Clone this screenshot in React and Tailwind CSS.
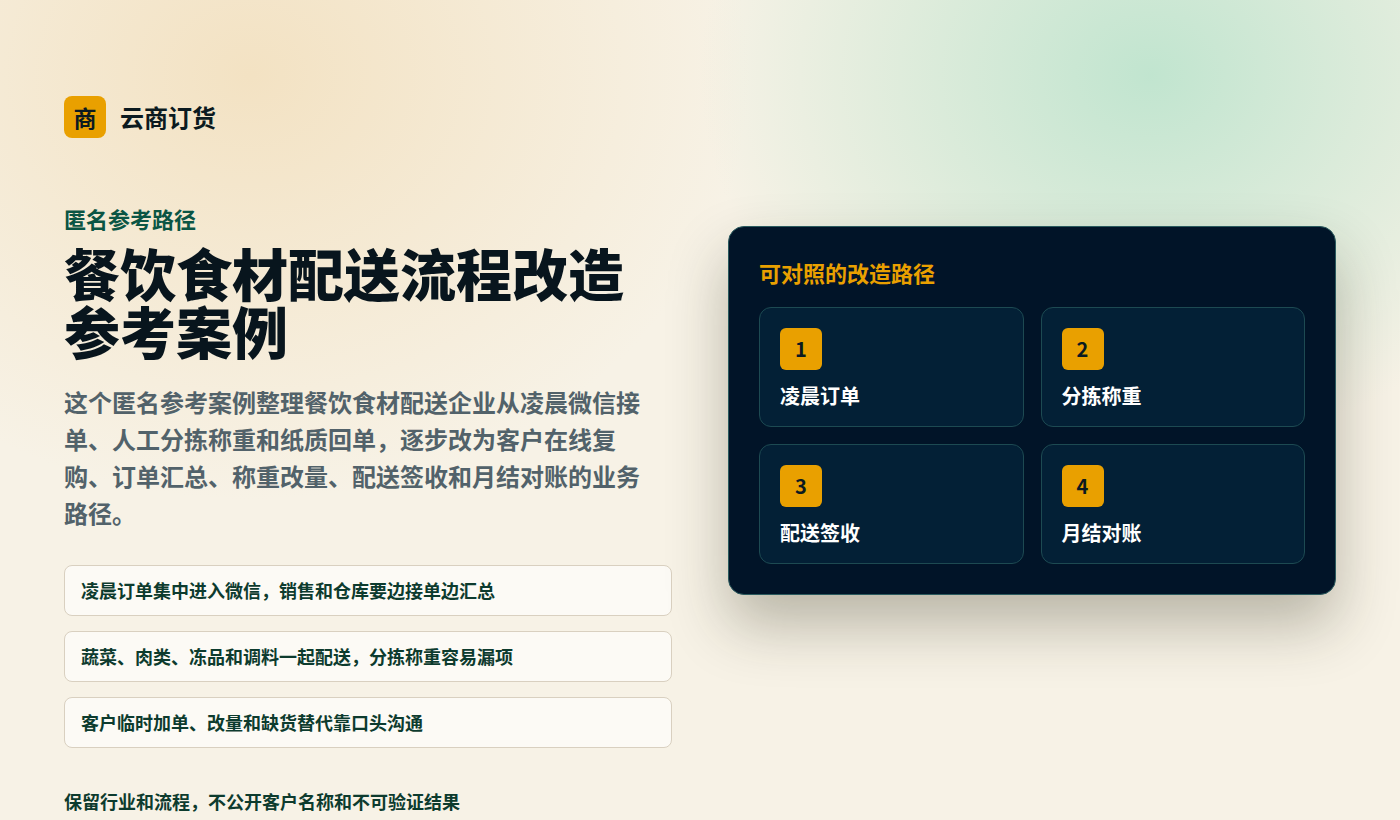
import React from "react";

const steps = ["凌晨订单", "分拣称重", "配送签收", "月结对账"];
const pains = [
  "凌晨订单集中进入微信，销售和仓库要边接单边汇总",
  "蔬菜、肉类、冻品和调料一起配送，分拣称重容易漏项",
  "客户临时加单、改量和缺货替代靠口头沟通",
];

export default function App() {
  return (
    <div
      className="relative min-h-[820px] w-full overflow-hidden bg-[#f7f2e6]"
      style={{ fontFamily: '"Noto Sans CJK SC", "Noto Sans", sans-serif' }}
    >
      <div className="pointer-events-none absolute -left-[250px] -top-[350px] h-[850px] w-[1000px] rounded-full bg-[radial-gradient(closest-side,rgba(242,222,186,0.8),rgba(247,242,230,0))]" />
      <div className="pointer-events-none absolute -top-[300px] right-[-200px] h-[750px] w-[900px] rounded-full bg-[radial-gradient(closest-side,rgba(190,228,206,0.95),rgba(247,242,230,0))]" />

      <div className="relative grid grid-cols-2 items-start gap-14 px-16 pt-24 pb-7">
        <div className="flex flex-col">
          <div className="flex items-center gap-[14px]">
            <div className="flex h-[42px] w-[42px] items-center justify-center rounded-lg bg-[#e9a000] text-[23px] font-bold text-[#0b1a20]">
              商
            </div>
            <span className="text-[24px] font-bold text-[#0b1a20]">云商订货</span>
          </div>
          <div className="mt-[64px] text-[22px] font-bold text-[#0b5544]">匿名参考路径</div>
          <h1 className="mt-2 text-[56px] font-black leading-[58px] text-[#08151d]">
            餐饮食材配送流程改造
            <br />
            参考案例
          </h1>
          <p className="mt-[24px] max-w-[595px] text-[24px] font-bold leading-[37px] text-[#52626a]">
            这个匿名参考案例整理餐饮食材配送企业从凌晨微信接单、人工分拣称重和纸质回单，逐步改为客户在线复购、订单汇总、称重改量、配送签收和月结对账的业务路径。
          </p>
          <div className="mt-[34px] flex flex-col gap-[15px]">
            {pains.map((t) => (
              <div
                key={t}
                className="flex h-[51px] items-center rounded-lg border border-[#d9d0c0] bg-white/60 px-4 text-[18px] font-bold text-[#0d3b2e]"
              >
                {t}
              </div>
            ))}
          </div>
          <div className="mt-[40px] text-[18px] font-bold text-[#0d3b2e]">
            保留行业和流程，不公开客户名称和不可验证结果
          </div>
        </div>

        <div className="mt-[130px] rounded-2xl border border-[#2a5a5e] bg-[#011428] p-[30px] shadow-[0_30px_60px_rgba(40,40,20,0.3)]">
          <div className="text-[22px] font-bold leading-[30px] text-[#e9a000]">可对照的改造路径</div>
          <div className="mt-[20px] grid grid-cols-2 gap-[17px]">
            {steps.map((s, i) => (
              <div
                key={s}
                className="h-[120px] rounded-xl border border-[#1d4a52] bg-[#032036] px-5 pt-5"
              >
                <div className="flex h-[42px] w-[42px] items-center justify-center rounded-md bg-[#e9a000] text-[20px] font-bold text-[#0b1a20]">
                  {i + 1}
                </div>
                <div className="mt-[12px] text-[20px] font-bold leading-[28px] text-white">{s}</div>
              </div>
            ))}
          </div>
        </div>
      </div>
    </div>
  );
}
